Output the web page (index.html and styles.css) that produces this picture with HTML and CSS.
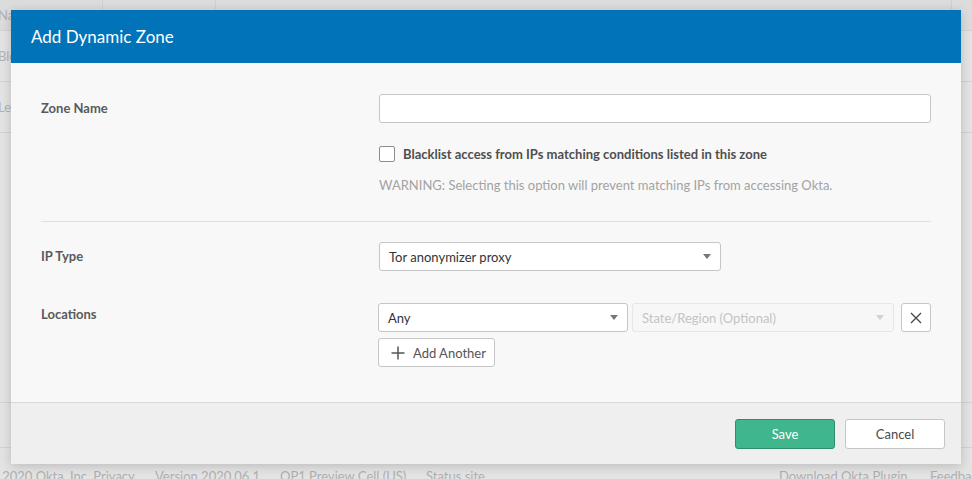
FILE: index.html
```html
<!DOCTYPE html>
<html>
<head>
<meta charset="utf-8">
<link rel="stylesheet" href="styles.css">
</head>
<body>
<div class="page">
  <div class="table">
    <div class="row head"><div class="c c1">Name</div><div class="c c2"></div><div class="c c3"></div><div class="c c4"></div></div>
    <div class="row"><div class="c c1">BlockedIpZone</div></div>
    <div class="row"><div class="c c1">LegacyIpZone</div></div>
  </div>
  <div class="spacer"></div>
  <div class="lower"></div>
  <div class="pfoot">
    <span class="f1">© 2020 Okta, Inc. Privacy</span>
    <span class="f2">Version 2020.06.1</span>
    <span class="f3">OP1 Preview Cell (US)</span>
    <span class="f4">Status site</span>
    <span class="fgrow"></span>
    <span class="f5">Download Okta Plugin</span>
    <span class="f6">Feedback</span>
  </div>
</div>

<div class="modal">
  <div class="mhead">Add Dynamic Zone</div>
  <div class="mbody">
    <div class="frow">
      <div class="label lab-mid">Zone Name</div>
      <div class="field">
        <div class="input"></div>
        <div class="check">
          <span class="box"></span>
          <span class="check-text">Blacklist access from IPs matching conditions listed in this zone</span>
        </div>
        <div class="warn">WARNING: Selecting this option will prevent matching IPs from accessing Okta.</div>
      </div>
    </div>
    <div class="sep"></div>
    <div class="frow iprow">
      <div class="label lab-mid">IP Type</div>
      <div class="field">
        <div class="select sel-ip"><span>Tor anonymizer proxy</span><span class="arrow"></span></div>
      </div>
    </div>
    <div class="frow locrow">
      <div class="label lab-top">Locations</div>
      <div class="field">
        <div class="locline">
          <div class="select sel-any"><span>Any</span><span class="arrow"></span></div>
          <div class="select sel-state disabled"><span>State/Region (Optional)</span><span class="arrow"></span></div>
          <div class="xbtn">
            <svg width="12" height="12" viewBox="0 0 12 12"><path d="M1 1 L11 11 M11 1 L1 11" stroke="#4a4a4a" stroke-width="1.4" fill="none"/></svg>
          </div>
        </div>
        <div class="addbtn">
          <svg width="14" height="14" viewBox="0 0 14 14"><path d="M7 0.5 V13.5 M0.5 7 H13.5" stroke="#555" stroke-width="1.5" fill="none"/></svg>
          <span>Add Another</span>
        </div>
      </div>
    </div>
  </div>
  <div class="mfoot">
    <div class="btn save">Save</div>
    <div class="btn cancel">Cancel</div>
  </div>
</div>
</body>
</html>
```
FILE: styles.css
```css
* { box-sizing: border-box; }
html, body { margin: 0; padding: 0; }
body {
  width: 972px;
  height: 479px;
  overflow: hidden;
  background: #e3e3e3;
  font-family: "Lato", "Open Sans", sans-serif;
  position: relative;
}
.page {
  display: flex;
  flex-direction: column;
  height: 479px;
  color: #b2b2b2;
  font-size: 13px;
}
.table .row {
  display: flex;
  height: 51px;
  border-bottom: 1px solid #d3d3d3;
  align-items: center;
}
.table .row.head {
  height: 31px;
  background: #dcdcdc;
}
.c { height: 100%; display: flex; align-items: center; }
.c1 { width: 105px; margin-left: -2px; border-right: 1px solid #d0d0d0; white-space: nowrap; overflow: hidden; }
.row:not(.head) .c1 { border-right: none; width: 13px; }
.c2 { width: 113px; border-right: 1px solid #d0d0d0; }
.c3 { width: 736px; border-right: 1px solid #d0d0d0; }
.spacer { flex: 1; border-bottom: 1px solid #d3d3d3; }
.lower { height: 45px; border-bottom: 1px solid #d3d3d3; }
.pfoot {
  height: 31px;
  display: flex;
  align-items: flex-start;
  padding-top: 20px;
  white-space: nowrap;
  color: #b0b0b0;
  font-size: 13px;
}
.f1 { margin-left: -12px; width: 167px; }
.f2 { width: 125px; }
.f3 { width: 146px; }
.fgrow { flex: 1; }
.f5 { width: 151px; }
.f6 { width: 42px; overflow: hidden; }

.modal {
  position: absolute;
  left: 11px;
  top: 10px;
  width: 950px;
  height: 454px;
  background: #f8f8f8;
  box-shadow: 0 2px 10px rgba(0,0,0,0.18);
  display: flex;
  flex-direction: column;
}
.mhead {
  height: 53px;
  background: #0073b9;
  color: #fff;
  font-size: 17px;
  padding-left: 20px;
  display: flex;
  align-items: center;
  padding-bottom: 1px;
}
.mbody {
  flex: 1;
  padding: 31px 30px 0 30px;
}
.frow { display: flex; }
.label {
  width: 338px;
  font-size: 13px;
  font-weight: bold;
  color: #5a5a5a;
}
.lab-mid { height: 29px; line-height: 29px; }
.lab-top { padding-top: 3px; }
.field { flex: 1; }
.input {
  height: 29px;
  background: #fff;
  border: 1px solid #c6c6c6;
  border-radius: 3px;
}
.check {
  display: flex;
  align-items: center;
  margin-top: 23px;
  height: 16px;
}
.box {
  width: 16px;
  height: 16px;
  background: #fff;
  border: 1px solid #8e8e8e;
  border-radius: 2px;
  margin-right: 8px;
}
.check-text { font-size: 13px; font-weight: bold; color: #4f4f4f; }
.warn {
  margin-top: 15px;
  font-size: 13px;
  color: #a3a3a3;
  line-height: 16px;
}
.sep {
  height: 1px;
  background: #e1e1e1;
  margin-top: 28px;
}
.iprow { margin-top: 20px; }
.select {
  height: 29px;
  background: #fff;
  border: 1px solid #c6c6c6;
  border-radius: 3px;
  display: flex;
  align-items: center;
  justify-content: space-between;
  padding: 0 9px 0 9px;
  font-size: 13px;
  color: #333;
}
.arrow {
  width: 0;
  height: 0;
  border-left: 4px solid transparent;
  border-right: 4px solid transparent;
  border-top: 5px solid #777;
}
.sel-ip { width: 342px; }
.locrow { margin-top: 32px; }
.locline { display: flex; gap: 4px; }
.sel-any { width: 250px; }
.sel-state { width: 262px; }
.select.disabled {
  background: #f7f7f7;
  border-color: #e6e6e6;
  color: #c4c4c4;
}
.select.disabled .arrow { border-top-color: #d2d2d2; }
.xbtn {
  margin-left: 3px;
  width: 30px;
  height: 29px;
  background: #fff;
  border: 1px solid #c6c6c6;
  border-radius: 3px;
  display: flex;
  align-items: center;
  justify-content: center;
}
.addbtn {
  margin-top: 6px;
  width: 117px;
  height: 29px;
  background: #fff;
  border: 1px solid #c6c6c6;
  border-radius: 3px;
  display: flex;
  align-items: center;
  padding-left: 12px;
  gap: 8px;
  font-size: 13px;
  color: #555;
}
.mfoot {
  height: 62px;
  border-top: 1px solid #d9d9d9;
  background: #efefef;
  display: flex;
  justify-content: flex-end;
  align-items: flex-start;
  padding: 16px 16px 0 0;
  gap: 10px;
}
.btn {
  width: 100px;
  height: 30px;
  border-radius: 3px;
  display: flex;
  align-items: center;
  justify-content: center;
  font-size: 13px;
}
.save {
  background: #3fb68d;
  border: 1px solid #2e8e6c;
  color: #fff;
}
.cancel {
  background: #fff;
  border: 1px solid #c6c6c6;
  color: #4a4a4a;
}
```
